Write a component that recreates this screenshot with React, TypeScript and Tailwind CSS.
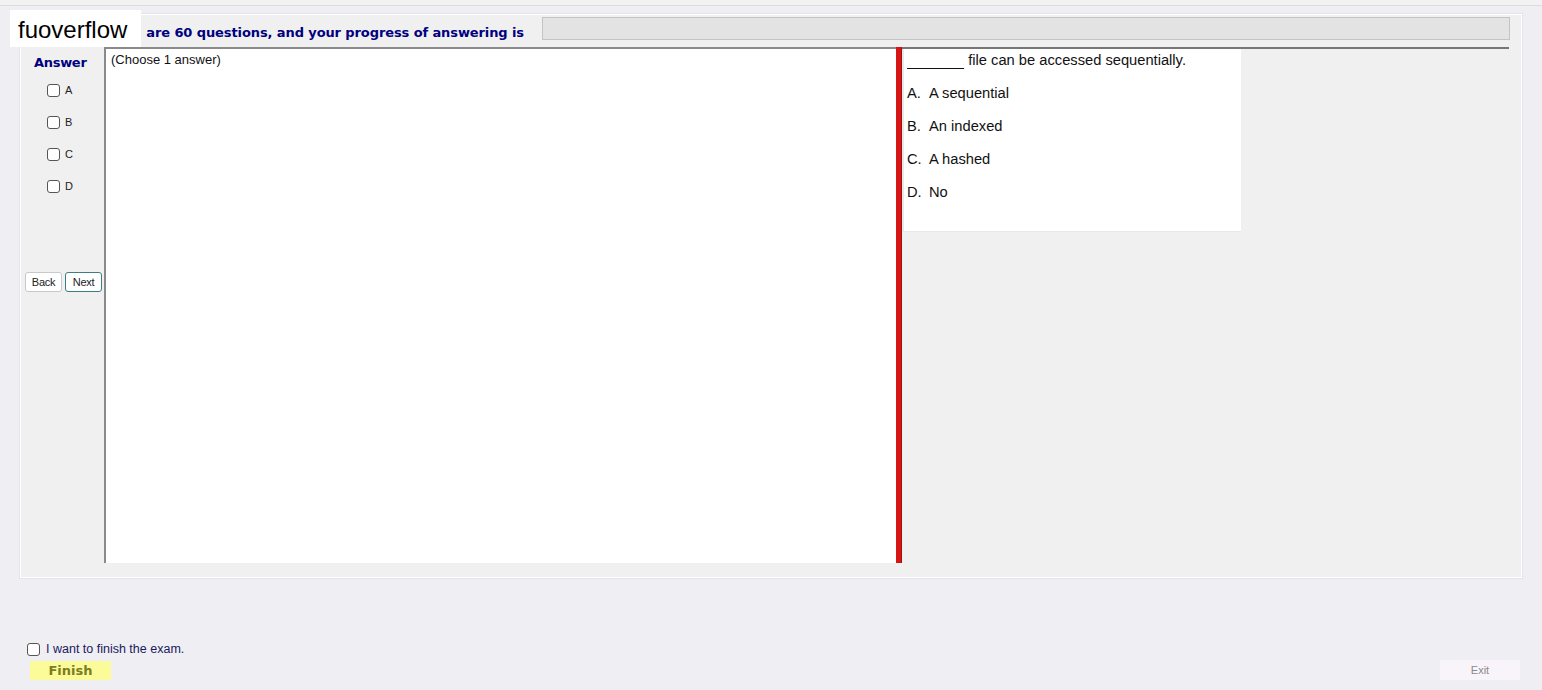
import React from "react";

const opts = ["A", "B", "C", "D"];
const answers = [
  ["A.", "A sequential"],
  ["B.", "An indexed"],
  ["C.", "A hashed"],
  ["D.", "No"],
];

function Box({ className = "" }: { className?: string }) {
  return (
    <span
      className={
        "inline-block w-[13px] h-[13px] rounded-[3px] border border-[#555] bg-white " +
        className
      }
    />
  );
}

export default function App() {
  return (
    <div className="relative w-[1542px] h-[690px] overflow-hidden bg-[#efeef3] font-['Liberation_Sans',Arial,sans-serif]">
      {/* top strip */}
      <div className="h-[6px] border-b border-[#dcdcdc] bg-[#f2f2f2]" />
      <div className="h-[8px]" />

      {/* main frame */}
      <div className="ml-[20px] w-[1502px] h-[564px] border border-white bg-[#f0f0f0] shadow-[0_0_0_1px_#e4e4e8] flex flex-col">
        {/* header */}
        <div className="h-[32px] flex items-start">
          <div className="w-[521px] pt-[10px] text-right pr-[18px] font-['DejaVu_Sans',Verdana,sans-serif] font-bold text-[13px] leading-[16px] text-[#000080] tracking-[-0.1px] whitespace-nowrap">
            are 60 questions, and your progress of answering is
          </div>
          <div className="mt-[2px] w-[968px] h-[23px] bg-[#e3e3e3] border border-[#c4c4c4]" />
        </div>

        {/* content */}
        <div className="flex h-[516px] pl-[3px]">
          {/* left column */}
          <div className="w-[80px] flex flex-col">
            <div className="pt-[8px] pl-[10px] font-['DejaVu_Sans',Verdana,sans-serif] font-bold text-[13px] leading-[16px] text-[#000080] tracking-[-0.3px]">
              Answer
            </div>
            <div className="flex flex-col pl-[23px] pt-[13px] gap-[19px]">
              {opts.map((o) => (
                <div key={o} className="flex items-center h-[13px] gap-[5px]">
                  <Box />
                  <span className="text-[11px] text-[#222] leading-[13px]">{o}</span>
                </div>
              ))}
            </div>
            <div className="mt-[79px] flex gap-[3px] pl-[1px]">
              <button className="w-[37px] h-[20px] rounded-[3px] border border-[#c9c9c9] bg-white text-[11px] text-[#222] tracking-[-0.3px]">
                Back
              </button>
              <button className="w-[37px] h-[20px] rounded-[3px] border border-[#3c7f82] bg-white text-[11px] text-[#222] tracking-[-0.3px]">
                Next
              </button>
            </div>
          </div>

          {/* question pane */}
          <div className="w-[792px] h-[516px] bg-white border-l-2 border-t-2 border-[#8a8a8a] pl-[5px] pt-[3px] text-[13px] text-[#111] leading-[16px]">
            (Choose 1 answer)
          </div>

          {/* splitter */}
          <div className="w-[6px] h-[516px] bg-[#d81515] border-r border-[#9b1010]" />

          {/* right pane */}
          <div className="w-[607px] h-[516px] border-t-2 border-[#777] bg-[#f0f0f0]">
            <div className="w-[339px] h-[183px] bg-white border-l-2 border-[#9a9a9a] border-b border-[#e8e8e8] pl-[3px] text-[14.7px] leading-[16px] text-[#111]">
              <div className="pt-[3px]">
                <span className="underline underline-offset-[3px] decoration-[#111]">
                  {"\u00a0".repeat(14)}
                </span>{" "}
                file can be accessed sequentially.
              </div>
              <div className="flex flex-col gap-[17px] mt-[17px]">
                {answers.map(([l, t]) => (
                  <div key={l} className="flex">
                    <span className="w-[22px]">{l}</span>
                    <span>{t}</span>
                  </div>
                ))}
              </div>
            </div>
          </div>
        </div>
      </div>

      {/* bottom */}
      <div className="mt-[64px] flex flex-col pl-[27px]">
        <div className="flex items-center gap-[6px] h-[14px]">
          <Box />
          <span className="text-[12.5px] text-[#1a1a5e]">I want to finish the exam.</span>
        </div>
        <div className="flex items-center justify-between mt-[4px] pr-[22px]">
          <button className="ml-[3px] w-[81px] h-[19px] bg-[#fbfb99] text-[#7c7c22] font-['DejaVu_Sans',Verdana,sans-serif] font-bold text-[13px] leading-[19px]">
            Finish
          </button>
          <button className="w-[80px] h-[20px] bg-[#f8f4fa] text-[#8a8a8a] text-[11px] leading-[20px]">
            Exit
          </button>
        </div>
      </div>

      {/* watermark logo */}
      <div className="absolute left-[10px] top-[10px] w-[131px] h-[37px] bg-white pl-[8px] pt-[6px] text-[24px] leading-[28px] text-black font-['Liberation_Sans',Arial,sans-serif]">
        fuoverflow
      </div>
    </div>
  );
}
